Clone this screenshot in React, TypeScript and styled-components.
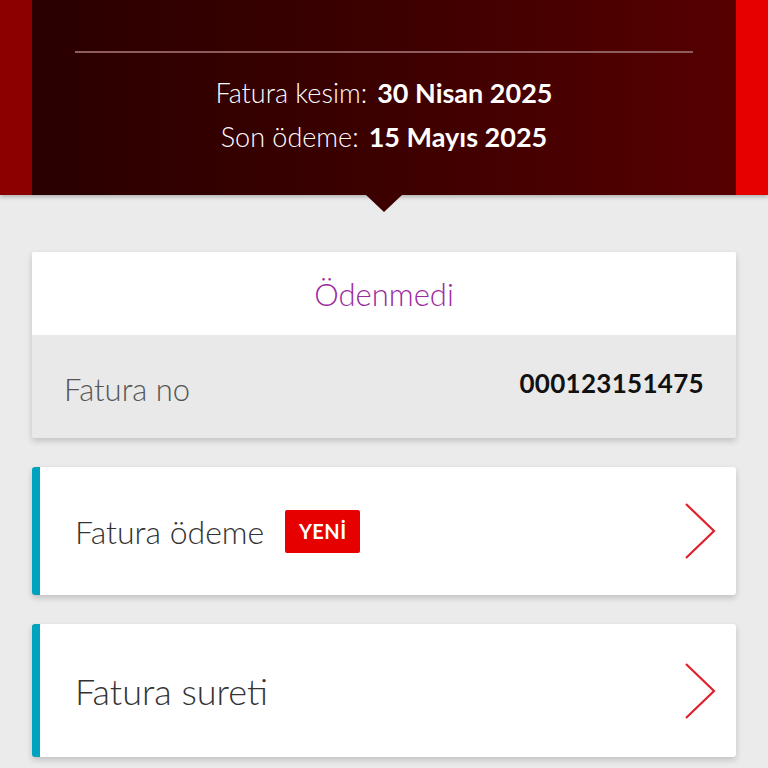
import React from "react";
import styled, { createGlobalStyle } from "styled-components";

const GlobalStyle = createGlobalStyle`
  html, body {
    margin: 0;
    padding: 0;
    background: #ebebeb;
    font-family: Lato, "Open Sans", sans-serif;
  }
`;

const Page = styled.div`
  width: 768px;
  min-height: 768px;
  background: #ebebeb;
  overflow: hidden;
`;

const Header = styled.div`
  position: relative;
  display: flex;
  height: 195px;
  box-shadow: 0 2px 4px rgba(0, 0, 0, 0.25);
  z-index: 1;
`;

const SideStrip = styled.div<{ $color: string }>`
  width: 32px;
  flex-shrink: 0;
  background: ${(p) => p.$color};
`;

const HeaderPanel = styled.div`
  flex: 1;
  background: linear-gradient(90deg, #2a0000 0%, #3c0000 50%, #560000 100%);
  padding-top: 51px;
  display: flex;
  flex-direction: column;
  align-items: center;
`;

const Divider = styled.div`
  align-self: stretch;
  margin: 0 43px 25px;
  height: 2px;
  background: #8e5c5c;
`;

const DateLine = styled.div`
  color: #fff;
  font-size: 27px;
  font-weight: 300;
  line-height: 30px;
  & + & {
    margin-top: 14px;
  }
`;

const DateValue = styled.span`
  font-weight: 700;
  margin-left: 10px;
`;

const Notch = styled.div`
  position: absolute;
  left: 366px;
  bottom: -17px;
  width: 0;
  height: 0;
  border-left: 18px solid transparent;
  border-right: 18px solid transparent;
  border-top: 17px solid #3d0000;
`;

const Content = styled.div`
  padding: 57px 32px 20px;
  display: flex;
  flex-direction: column;
  gap: 29px;
`;

const StatusCard = styled.div`
  background: #e9e9e9;
  box-shadow: 0 3px 6px rgba(0, 0, 0, 0.18);
  border-radius: 2px;
  overflow: hidden;
`;

const StatusTitle = styled.div`
  height: 83px;
  background: #fff;
  display: flex;
  align-items: center;
  justify-content: center;
  color: #9c2aa0;
  font-size: 31px;
  font-weight: 300;
`;

const InfoRow = styled.div`
  height: 103px;
  display: flex;
  align-items: center;
  justify-content: space-between;
  padding: 0 32px;
  box-sizing: border-box;
`;

const InfoLabel = styled.span`
  color: #555;
  font-size: 31px;
  font-weight: 300;
  margin-top: 4px;
`;

const InfoValue = styled.span`
  color: #111;
  font-size: 26px;
  font-weight: 700;
  letter-spacing: 0.3px;
  margin-top: -8px;
`;

const LinkCard = styled.div<{ $height: number }>`
  height: ${(p) => p.$height}px;
  background: #fff;
  border-left: 8px solid #00a3bd;
  border-radius: 3px;
  box-shadow: 0 3px 6px rgba(0, 0, 0, 0.18);
  display: flex;
  align-items: center;
  padding: 0 20px 0 35px;
  box-sizing: border-box;
`;

const LinkLabel = styled.span<{ $size: number }>`
  color: #333;
  font-size: ${(p) => p.$size}px;
  font-weight: 300;
  flex: 1;
  display: flex;
  align-items: center;
  gap: 21px;
`;

const Badge = styled.span`
  background: #e60000;
  color: #fff;
  font-size: 20px;
  font-weight: 700;
  letter-spacing: 0.5px;
  border-radius: 2px;
  width: 75px;
  height: 43px;
  display: inline-flex;
  align-items: center;
  justify-content: center;
`;

const Chevron = () => (
  <svg width="32" height="56" viewBox="0 0 32 56" fill="none">
    <path d="M2 1 L30 28 L2 55" stroke="#e0202c" strokeWidth="2.2" />
  </svg>
);

const App: React.FC = () => {
  return (
    <Page>
      <GlobalStyle />
      <Header>
        <SideStrip $color="#8c0000" />
        <HeaderPanel>
          <Divider />
          <DateLine>
            Fatura kesim:<DateValue>30 Nisan 2025</DateValue>
          </DateLine>
          <DateLine>
            Son ödeme:<DateValue>15 Mayıs 2025</DateValue>
          </DateLine>
        </HeaderPanel>
        <SideStrip $color="#e60000" />
        <Notch />
      </Header>
      <Content>
        <StatusCard>
          <StatusTitle>Ödenmedi</StatusTitle>
          <InfoRow>
            <InfoLabel>Fatura no</InfoLabel>
            <InfoValue>000123151475</InfoValue>
          </InfoRow>
        </StatusCard>
        <LinkCard $height={128}>
          <LinkLabel $size={32}>
            Fatura ödeme <Badge>YENİ</Badge>
          </LinkLabel>
          <Chevron />
        </LinkCard>
        <LinkCard $height={133}>
          <LinkLabel $size={36}>Fatura sureti</LinkLabel>
          <Chevron />
        </LinkCard>
      </Content>
    </Page>
  );
};

export default App;
